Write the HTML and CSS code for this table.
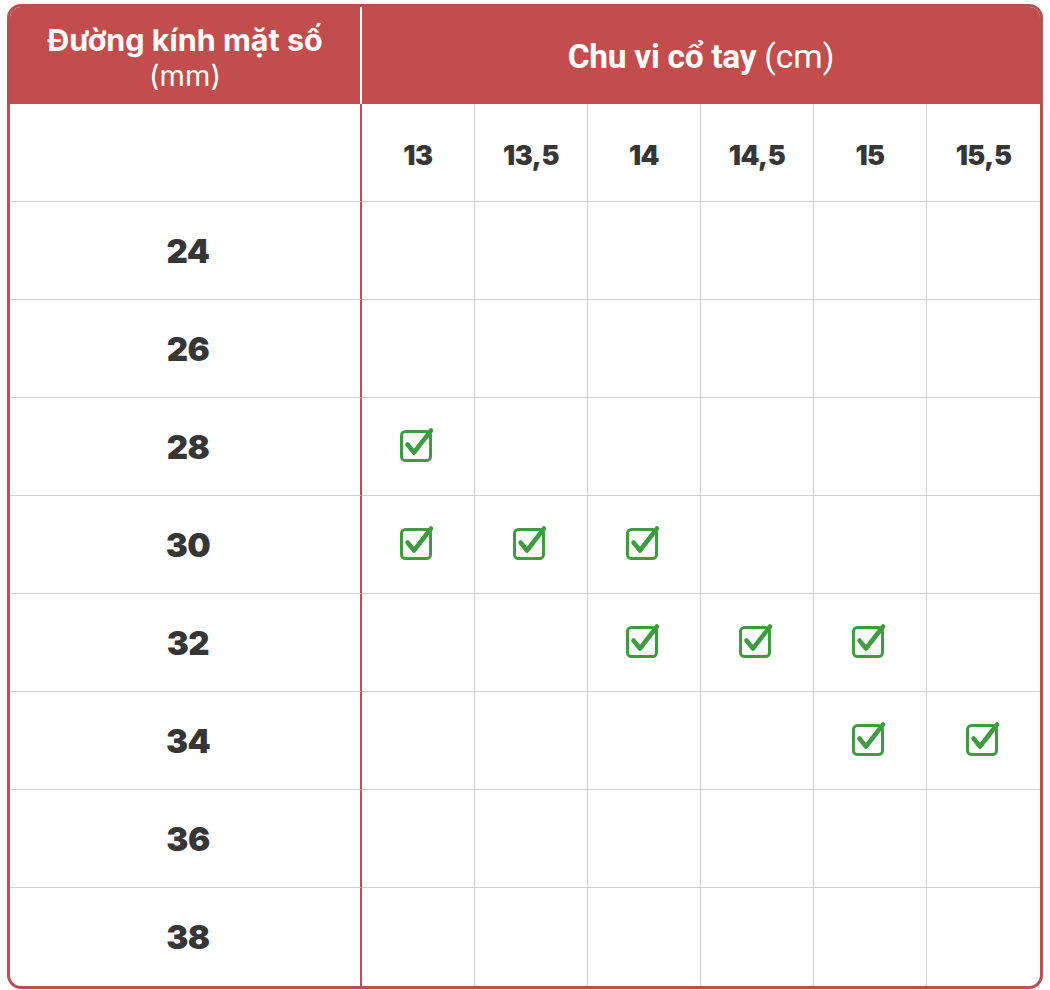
FILE: index.html
```html
<!DOCTYPE html>
<html lang="vi">
<head>
<meta charset="utf-8">
<title>Bảng size</title>
<link rel="stylesheet" href="styles.css">
</head>
<body>
<svg width="0" height="0" class="defs">
  <defs>
    <symbol id="chk" viewBox="0 0 36 36">
      <rect x="2.5" y="5.5" width="29" height="29" rx="4" ry="4" fill="none" stroke="#3e9b3f" stroke-width="3"/>
      <path d="M8.5 18.5 L15 26.5 L32 4.5" fill="none" stroke="#3e9b3f" stroke-width="4.5" stroke-linejoin="round" stroke-linecap="round"/>
    </symbol>
  </defs>
</svg>
<div class="table">
  <div class="head">
    <div class="head-left"><b>Đường kính mặt số</b><span>(mm)</span></div>
    <div class="head-right"><b>Chu vi cổ tay</b> <span>(cm)</span></div>
  </div>
  <div class="body" id="body"></div>
</div>
<script src="app.js"></script>
</body>
</html>
```
FILE: app.js
```js
const cols = ["13", "13,5", "14", "14,5", "15", "15,5"];
const rows = ["24", "26", "28", "30", "32", "34", "36", "38"];
const checks = { "28": [0], "30": [0, 1, 2], "32": [2, 3, 4], "34": [4, 5] };
const body = document.getElementById("body");
function cell(cls, html) {
  const d = document.createElement("div");
  d.className = cls;
  d.innerHTML = html;
  body.appendChild(d);
}
cell("c lead", "");
cols.forEach(c => cell("c colh", c));
rows.forEach((r, ri) => {
  cell("c lead rowh" + (ri === rows.length - 1 ? " last" : ""), r);
  cols.forEach((c, ci) => {
    const on = (checks[r] || []).includes(ci);
    cell("c" + (ri === rows.length - 1 ? " last" : ""),
      on ? '<svg class="chk" width="36" height="36"><use href="#chk"/></svg>' : "");
  });
});
```
FILE: styles.css
```css
html, body { margin: 0; padding: 0; background: #fff; }
body { padding: 4px 0 0 7px; }
.defs { position: absolute; }
.table {
  width: 1030px;
  border: 3px solid #b65152;
  border-radius: 14px;
  overflow: hidden;
  font-family: "Inter", "Liberation Sans", sans-serif;
}
.head {
  display: grid;
  grid-template-columns: 352px 1fr;
  height: 97px;
  background: #c14d4d;
  color: #fff;
}
.head-left {
  border-right: 2px solid #fff;
  display: flex;
  flex-direction: column;
  align-items: center;
  justify-content: center;
  padding-top: 3px;
}
.head-left b { display: block; font-weight: 700; font-size: 30.5px; line-height: 36px; letter-spacing: 0; }
.head-left span { display: block; font-weight: 400; font-size: 29px; line-height: 32px; margin-top: 2.5px; }
.head-right {
  display: flex;
  align-items: center;
  justify-content: center;
  font-size: 33.5px;
  gap: 8px;
  padding-top: 2px;
}
.head-right b { font-weight: 700; font-family: "Roboto", sans-serif; letter-spacing: -0.3px; }
.head-right span { font-weight: 400; font-family: "Roboto", sans-serif; }
.body {
  display: grid;
  grid-template-columns: 352px repeat(6, 113px);
  grid-auto-rows: 98px;
}
.c {
  box-sizing: border-box;
  border-right: 1px solid #cfcfcf;
  border-bottom: 1px solid #cfcfcf;
  display: flex;
  align-items: center;
  justify-content: center;
  color: #363636;
  font-weight: 800;
}
.c:nth-child(7n) { border-right: none; }
.c.last { border-bottom: none; }
.lead { border-right: 2px solid #b65152; }
.colh { font-size: 27px; letter-spacing: -0.5px; padding-top: 6px; font-weight: 900; }
.rowh { font-size: 33px; letter-spacing: -0.5px; padding-left: 6px; font-weight: 900; }
.chk { display: block; margin-left: -2px; margin-top: -6px; }
```
